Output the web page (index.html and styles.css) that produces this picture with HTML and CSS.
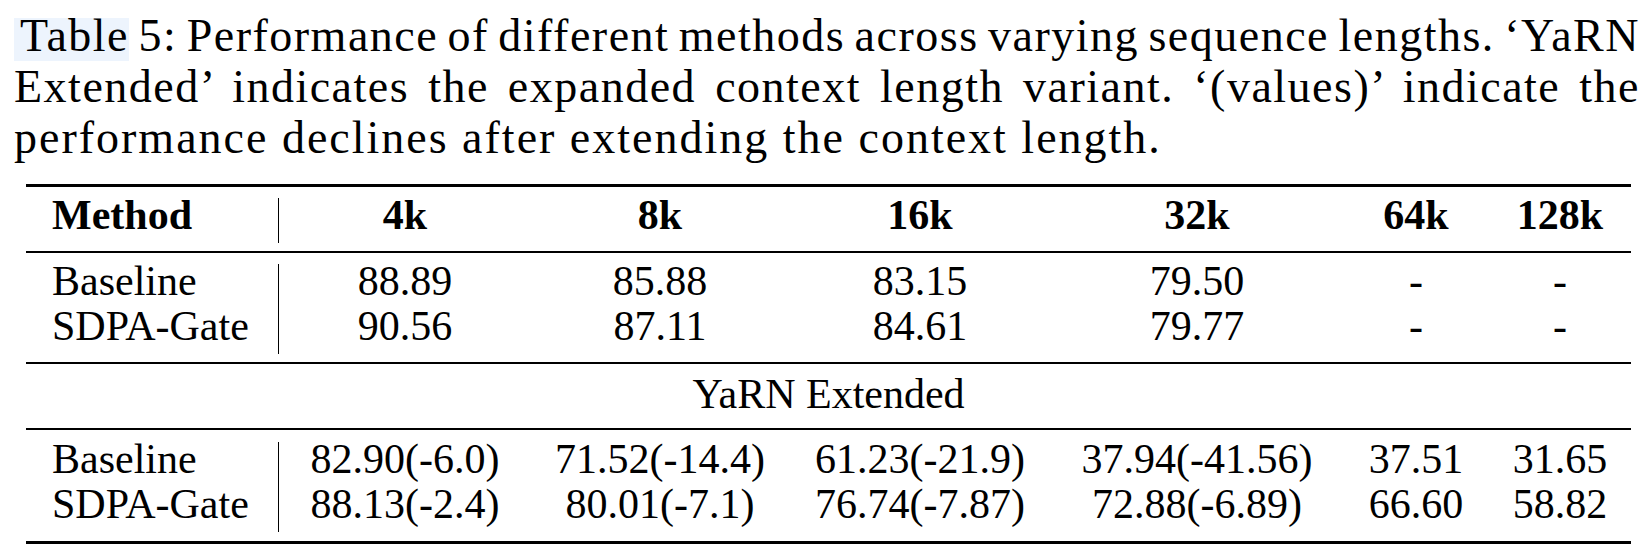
FILE: index.html
```html
<!DOCTYPE html>
<html lang="en">
<head>
  <meta charset="UTF-8" />
  <meta name="viewport" content="width=device-width, initial-scale=1.0" />
  <title>Table 5</title>
  <link rel="stylesheet" href="styles.css">
</head>
<body>
  <p class="caption">
    <span class="line first-line"><span class="ref">Table</span> 5: Performance of different methods across varying sequence lengths. &lsquo;YaRN</span>
    <span class="line">Extended&rsquo; indicates the expanded context length variant. &lsquo;(values)&rsquo; indicate the</span>
    <span class="line last">performance declines after extending the context length.</span>
  </p>

  <div class="tbl">
    <div class="rule thick top"></div>

    <div class="cell head first">Method</div>
    <div class="cell head">4k</div>
    <div class="cell head">8k</div>
    <div class="cell head">16k</div>
    <div class="cell head">32k</div>
    <div class="cell head">64k</div>
    <div class="cell head">128k</div>

    <div class="rule mid"></div>

    <div class="cell first">Baseline</div>
    <div class="cell">88.89</div>
    <div class="cell">85.88</div>
    <div class="cell">83.15</div>
    <div class="cell">79.50</div>
    <div class="cell">-</div>
    <div class="cell">-</div>

    <div class="cell first">SDPA-Gate</div>
    <div class="cell">90.56</div>
    <div class="cell">87.11</div>
    <div class="cell">84.61</div>
    <div class="cell">79.77</div>
    <div class="cell">-</div>
    <div class="cell">-</div>

    <div class="rule sep"></div>
    <div class="group">YaRN Extended</div>
    <div class="rule after-group"></div>

    <div class="cell first">Baseline</div>
    <div class="cell">82.90(-6.0)</div>
    <div class="cell">71.52(-14.4)</div>
    <div class="cell">61.23(-21.9)</div>
    <div class="cell">37.94(-41.56)</div>
    <div class="cell">37.51</div>
    <div class="cell">31.65</div>

    <div class="cell first">SDPA-Gate</div>
    <div class="cell">88.13(-2.4)</div>
    <div class="cell">80.01(-7.1)</div>
    <div class="cell">76.74(-7.87)</div>
    <div class="cell">72.88(-6.89)</div>
    <div class="cell">66.60</div>
    <div class="cell">58.82</div>

    <div class="rule thick bottom"></div>
  </div>
</body>
</html>
```

FILE: styles.css
```css
body {
  margin: 0;
  background: #fff;
  color: #000;
  font-family: "Liberation Serif", "Times New Roman", serif;
}
.caption {
  margin: 0;
  padding: 10px 8px 0 14px;
  font-size: 46px;
  line-height: 51px;
  letter-spacing: 1.5px;
}
.line {
  display: block;
  text-align: justify;
  text-align-last: justify;
}
.line.first-line {
  word-spacing: -7px;
}
.line.last {
  text-align-last: left;
  letter-spacing: 2px;
}
.ref {
  padding-left: 6px;
  background: linear-gradient(to bottom, transparent 8px, #edf4fd 8px);
}
.tbl {
  display: grid;
  grid-template-columns: 253px 252px 258px 262px 292px 146px 142px;
  width: 1605px;
  margin: 21px 0 0 26px;
  font-size: 42px;
}
.rule {
  grid-column: 1 / -1;
  border-top: 2px solid #000;
}
.rule.thick {
  border-top-width: 3px;
}
.rule.top {
  margin-bottom: 11px;
}
.rule.mid {
  margin: 8px 0 11px;
}
.rule.sep {
  margin-top: 8px;
}
.rule.after-group {
  margin-bottom: 12px;
}
.rule.bottom {
  margin-top: 9px;
}
.cell {
  line-height: 35px;
  padding-bottom: 10px;
  text-align: center;
}
.cell.first {
  text-align: left;
  padding-left: 26px;
  border-right: 1px solid #000;
}
.head {
  font-weight: bold;
}
.group {
  grid-column: 1 / -1;
  text-align: center;
  line-height: 35px;
  padding: 13px 0 16px;
}
```
